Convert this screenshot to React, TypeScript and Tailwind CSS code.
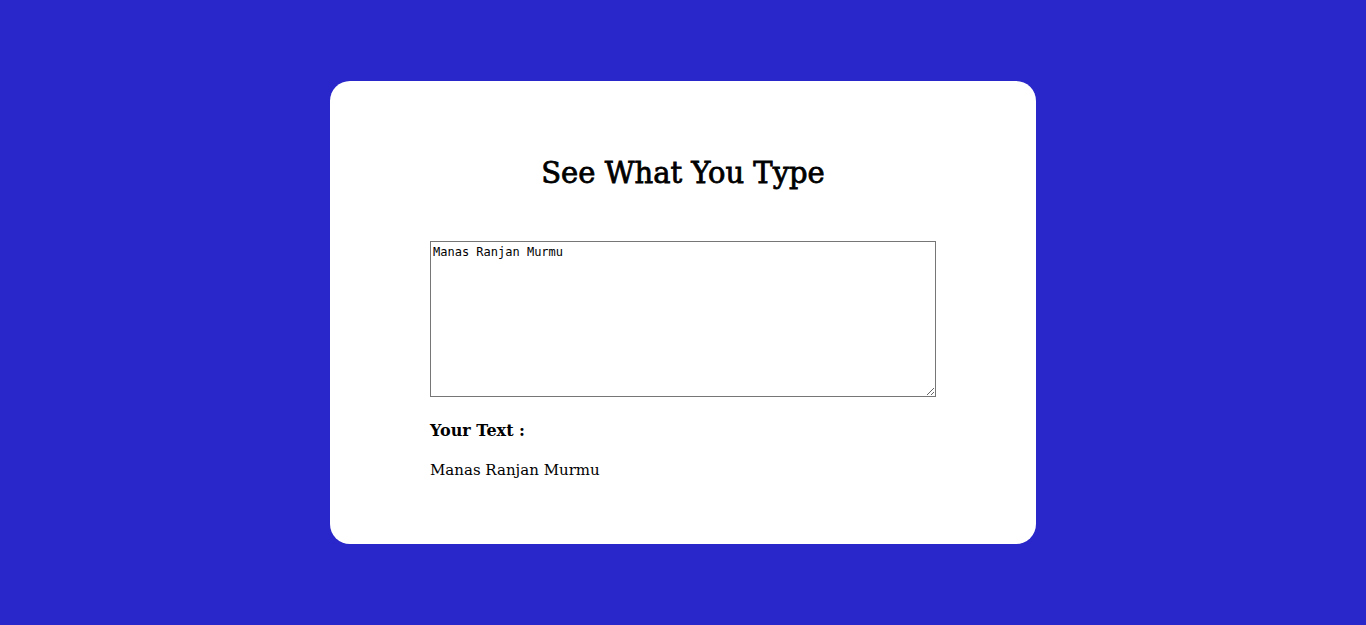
import React, { useState } from "react";

export default function App() {
  const [text, setText] = useState("Manas Ranjan Murmu");
  return (
    <div className="min-h-screen w-full bg-[#2927c9] flex items-center justify-center">
      <div className="w-[706px] h-[463px] bg-white rounded-[20px] px-[100px] pt-[72px] flex flex-col" style={{ fontFamily: '"DejaVu Serif", serif' }}>
        <h1 className="h-[40px] leading-[40px] text-center text-[29px] font-normal text-black [-webkit-text-stroke:0.8px_black]">See What You Type</h1>
        <textarea
          value={text}
          onChange={(e) => setText(e.target.value)}
          className="mt-[48px] w-[506px] h-[156px] border border-[#767676] pt-[3px] px-[2px] pb-[2px] text-[12px] leading-[14px] text-black bg-white resize"
          style={{ fontFamily: '"DejaVu Sans Mono", monospace' }}
        />
        <div className="mt-[22px] h-[24px] leading-[24px] text-[16px] font-bold text-black">Your Text :</div>
        <div className="mt-[15px] h-[24px] leading-[24px] text-[15px] text-black">{text}</div>
      </div>
    </div>
  );
}
